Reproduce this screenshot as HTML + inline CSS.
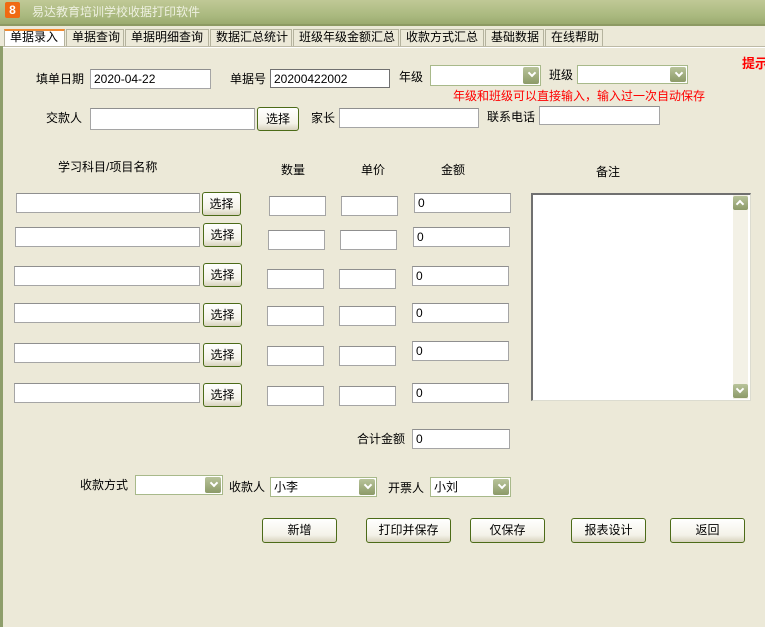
<!DOCTYPE html>
<html><head><meta charset="utf-8"><style>
*{box-sizing:border-box;margin:0;padding:0}
body{width:765px;height:627px;overflow:hidden;background:#ece9d8;font-family:"Liberation Sans","Noto Sans CJK SC",sans-serif;font-size:12px;color:#000;position:relative}
.a{position:absolute;white-space:nowrap;line-height:14px;font-size:12px}
.in{position:absolute;background:#fff;border:1px solid #a5a5a5;border-top-color:#8f8f8f;font-size:12px;padding:2px 3px;line-height:14px;white-space:nowrap}
.btn{position:absolute;background:linear-gradient(#fff,#f4f2e8 70%,#d8d3be);border:1px solid #4c6b18;border-radius:3px;text-align:center;font-size:12px;line-height:22px;white-space:nowrap}
.sel{position:absolute;background:#fff;border:1px solid #a8b98a;font-size:12px;padding:1px 3px;line-height:16px;white-space:nowrap}
.sel:after{content:"";position:absolute;right:1px;top:1px;bottom:1px;width:16px;background:linear-gradient(#b8c39a,#8c9a68);border-radius:2px}
.sel i{position:absolute;right:5px;top:4px;width:6px;height:6px;border-right:2px solid #fff;border-bottom:2px solid #fff;transform:rotate(45deg);z-index:2}
.tab{position:absolute;top:29px;height:17px;border:1px solid #b5b39e;border-bottom:none;background:#ece9d8;font-size:12px;line-height:15px;padding-left:5px;white-space:nowrap;overflow:hidden}
</style></head><body>
<div style="position:absolute;left:0;top:0;width:765px;height:26px;background:linear-gradient(#c0c996,#aab97f 60%,#98a76c)"></div>
<div style="position:absolute;left:0;top:24px;width:765px;height:2px;background:#8d9a63"></div>
<div style="position:absolute;left:5px;top:2px;width:15px;height:16px;background:#f06a12;border-radius:2px;color:#fff;font-weight:bold;font-size:12px;line-height:16px;text-align:center">8</div>
<div class="a" style="left:32px;top:5px;color:#eef0e0;font-size:12px">易达教育培训学校收据打印软件</div>

<div class="tab" style="left:4px;width:61px;background:#fff;border-top:2px solid #f08a30;line-height:13px">单据录入</div>
<div class="tab" style="left:66px;width:58px">单据查询</div>
<div class="tab" style="left:125px;width:84px">单据明细查询</div>
<div class="tab" style="left:210px;width:82px">数据汇总统计</div>
<div class="tab" style="left:293px;width:106px">班级年级金额汇总</div>
<div class="tab" style="left:400px;width:84px">收款方式汇总</div>
<div class="tab" style="left:485px;width:59px">基础数据</div>
<div class="tab" style="left:545px;width:58px">在线帮助</div>
<div style="position:absolute;left:3px;top:46px;width:762px;height:2px;background:#fff;border-top:1px solid #bdbaa6"></div>
<div style="position:absolute;left:0;top:46px;width:3px;height:581px;background:#8e9e6b"></div>

<div class="a" style="left:36px;top:72px">填单日期</div>
<div class="in" style="left:90px;top:69px;width:121px;height:20px">2020-04-22</div>
<div class="a" style="left:230px;top:72px">单据号</div>
<div class="in" style="left:270px;top:69px;width:120px;height:19px;border-color:#707070">20200422002</div>
<div class="a" style="left:399px;top:70px">年级</div>
<div class="sel" style="left:430px;top:65px;width:111px;height:21px"><i></i></div>
<div class="a" style="left:549px;top:68px">班级</div>
<div class="sel" style="left:577px;top:65px;width:111px;height:19px"><i></i></div>
<div class="a" style="left:742px;top:57px;color:#f00;font-weight:bold;font-size:13px">提示</div>
<div class="a" style="left:453px;top:89px;color:#f00">年级和班级可以直接输入，输入过一次自动保存</div>

<div class="a" style="left:46px;top:111px">交款人</div>
<div class="in" style="left:90px;top:108px;width:165px;height:22px"></div>
<div class="btn" style="left:257px;top:107px;width:42px;height:24px">选择</div>
<div class="a" style="left:311px;top:111px">家长</div>
<div class="in" style="left:339px;top:108px;width:140px;height:20px"></div>
<div class="a" style="left:487px;top:110px">联系电话</div>
<div class="in" style="left:539px;top:106px;width:121px;height:19px"></div>

<div class="a" style="left:58px;top:160px">学习科目/项目名称</div>
<div class="a" style="left:281px;top:163px">数量</div>
<div class="a" style="left:361px;top:163px">单价</div>
<div class="a" style="left:441px;top:163px">金额</div>
<div class="a" style="left:596px;top:165px">备注</div>

<div class="in" style="left:16px;top:193px;width:184px;height:20px"></div>
<div class="btn" style="left:202px;top:192px;width:39px;height:24px">选择</div>
<div class="in" style="left:269px;top:196px;width:57px;height:20px"></div>
<div class="in" style="left:341px;top:196px;width:57px;height:20px"></div>
<div class="in" style="left:414px;top:193px;width:97px;height:20px">0</div>

<div class="in" style="left:15px;top:227px;width:185px;height:20px"></div>
<div class="btn" style="left:203px;top:223px;width:39px;height:24px">选择</div>
<div class="in" style="left:268px;top:230px;width:57px;height:20px"></div>
<div class="in" style="left:340px;top:230px;width:57px;height:20px"></div>
<div class="in" style="left:413px;top:227px;width:97px;height:20px">0</div>

<div class="in" style="left:14px;top:266px;width:186px;height:20px"></div>
<div class="btn" style="left:203px;top:263px;width:39px;height:24px">选择</div>
<div class="in" style="left:267px;top:269px;width:57px;height:20px"></div>
<div class="in" style="left:339px;top:269px;width:57px;height:20px"></div>
<div class="in" style="left:412px;top:266px;width:97px;height:20px">0</div>

<div class="in" style="left:14px;top:303px;width:186px;height:20px"></div>
<div class="btn" style="left:203px;top:303px;width:39px;height:24px">选择</div>
<div class="in" style="left:267px;top:306px;width:57px;height:20px"></div>
<div class="in" style="left:339px;top:306px;width:57px;height:20px"></div>
<div class="in" style="left:412px;top:303px;width:97px;height:20px">0</div>

<div class="in" style="left:14px;top:343px;width:186px;height:20px"></div>
<div class="btn" style="left:203px;top:343px;width:39px;height:24px">选择</div>
<div class="in" style="left:267px;top:346px;width:57px;height:20px"></div>
<div class="in" style="left:339px;top:346px;width:57px;height:20px"></div>
<div class="in" style="left:412px;top:341px;width:97px;height:20px">0</div>

<div class="in" style="left:14px;top:383px;width:186px;height:20px"></div>
<div class="btn" style="left:203px;top:383px;width:39px;height:24px">选择</div>
<div class="in" style="left:267px;top:386px;width:57px;height:20px"></div>
<div class="in" style="left:339px;top:386px;width:57px;height:20px"></div>
<div class="in" style="left:412px;top:383px;width:97px;height:20px">0</div>

<div style="position:absolute;left:531px;top:193px;width:220px;height:208px;background:#fff;border:1px solid #dcdcd0;border-left:2px solid #707070;border-top:2px solid #707070"></div>
<div style="position:absolute;left:733px;top:195px;width:15px;height:204px;background:#f3f1e6"></div>
<div style="position:absolute;left:733px;top:196px;width:15px;height:14px;background:linear-gradient(#b8c39a,#8c9a68);border-radius:2px"></div>
<div style="position:absolute;left:737px;top:201px;width:6px;height:6px;border-left:2px solid #fff;border-top:2px solid #fff;transform:rotate(45deg)"></div>
<div style="position:absolute;left:733px;top:384px;width:15px;height:14px;background:linear-gradient(#b8c39a,#8c9a68);border-radius:2px"></div>
<div style="position:absolute;left:737px;top:386px;width:6px;height:6px;border-right:2px solid #fff;border-bottom:2px solid #fff;transform:rotate(45deg)"></div>

<div class="a" style="left:357px;top:432px">合计金额</div>
<div class="in" style="left:412px;top:429px;width:98px;height:20px">0</div>

<div class="a" style="left:80px;top:478px">收款方式</div>
<div class="sel" style="left:135px;top:475px;width:88px;height:20px"><i></i></div>
<div class="a" style="left:229px;top:480px">收款人</div>
<div class="sel" style="left:270px;top:477px;width:107px;height:20px">小李<i></i></div>
<div class="a" style="left:388px;top:481px">开票人</div>
<div class="sel" style="left:430px;top:477px;width:81px;height:20px">小刘<i></i></div>

<div class="btn" style="left:262px;top:518px;width:75px;height:25px">新增</div>
<div class="btn" style="left:366px;top:518px;width:85px;height:25px">打印并保存</div>
<div class="btn" style="left:470px;top:518px;width:75px;height:25px">仅保存</div>
<div class="btn" style="left:571px;top:518px;width:75px;height:25px">报表设计</div>
<div class="btn" style="left:670px;top:518px;width:75px;height:25px">返回</div>
</body></html>
